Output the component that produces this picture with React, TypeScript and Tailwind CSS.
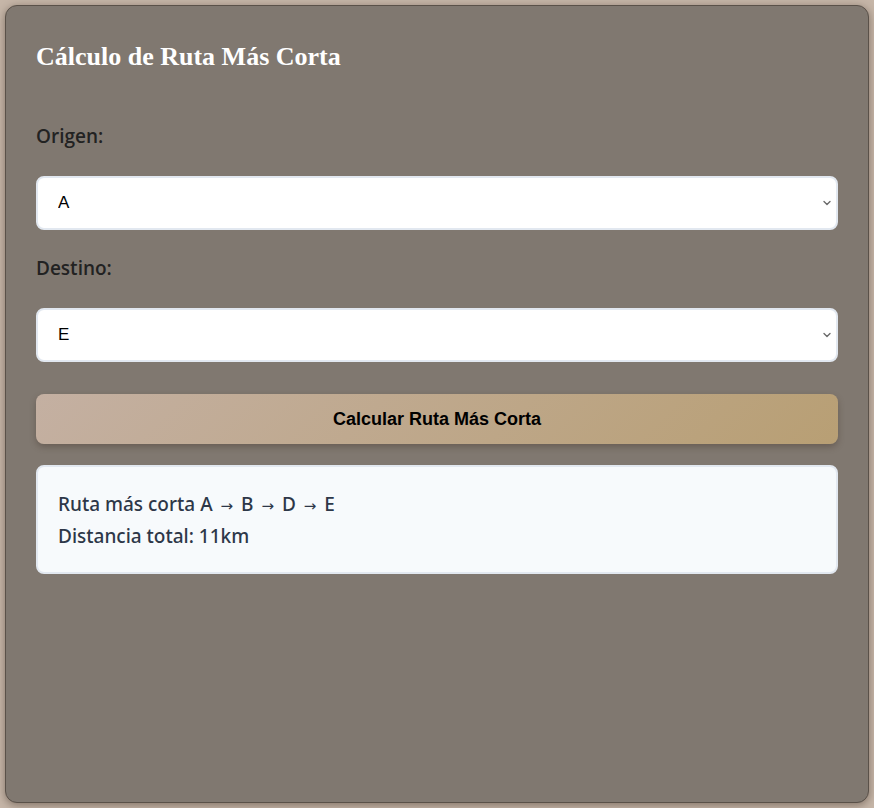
import { useState } from "react";

const NODES = ["A", "B", "C", "D", "E"];
const RUTA = ["A", "B", "D", "E"];

function Chevron() {
  return (
    <svg
      className="pointer-events-none absolute right-[6px] top-1/2 -translate-y-1/2"
      width="10"
      height="10"
      viewBox="0 0 10 10"
      fill="none"
    >
      <path d="M2 3.5L5 6.5L8 3.5" stroke="#6b6b6b" strokeWidth="1.4" strokeLinecap="round" strokeLinejoin="round" />
    </svg>
  );
}

export default function App() {
  const [origen, setOrigen] = useState("A");
  const [destino, setDestino] = useState("E");

  return (
    <div className="min-h-screen bg-[#c6b6a8] p-[5px]">
      {/* Card */}
      <div className="min-h-[798px] rounded-xl border border-[#5a5149] bg-[#807870] px-[30px] pt-[30px] shadow-[0_2px_8px_rgba(60,45,35,0.5)]">
        <h2
          className="text-[26px] font-bold leading-[42px] text-white"
          style={{ fontFamily: '"Liberation Serif", "DejaVu Serif", serif' }}
        >
          Cálculo de Ruta Más Corta
        </h2>

        <label className="mt-[44px] block font-['Open_Sans',sans-serif] text-[19px] font-semibold leading-[28px] text-[#222]">
          Origen:
        </label>
        <div className="relative mt-[26px]">
          <select
            value={origen}
            onChange={(e) => setOrigen(e.target.value)}
            className="block h-[54px] w-full appearance-none rounded-lg border-2 border-[#e2e8f0] bg-white pl-5 pr-6 font-['Liberation_Sans',Arial,sans-serif] text-[17px] text-black"
          >
            {NODES.map((n) => (
              <option key={n} value={n}>{n}</option>
            ))}
          </select>
          <Chevron />
        </div>

        <label className="mt-[24px] block font-['Open_Sans',sans-serif] text-[19px] font-semibold leading-[28px] text-[#222]">
          Destino:
        </label>
        <div className="relative mt-[26px]">
          <select
            value={destino}
            onChange={(e) => setDestino(e.target.value)}
            className="block h-[54px] w-full appearance-none rounded-lg border-2 border-[#e2e8f0] bg-white pl-5 pr-6 font-['Liberation_Sans',Arial,sans-serif] text-[17px] text-black"
          >
            {NODES.map((n) => (
              <option key={n} value={n}>{n}</option>
            ))}
          </select>
          <Chevron />
        </div>

        <button className="mt-8 block h-[50px] w-full rounded-lg bg-[linear-gradient(135deg,#c4b0a2,#b89f74)] font-['Liberation_Sans',Arial,sans-serif] text-[18px] font-bold text-black shadow-[0_3px_6px_rgba(60,45,35,0.35)]">
          Calcular Ruta Más Corta
        </button>

        {/* Resultado */}
        <div className="mt-[21px] rounded-lg border-2 border-[#e2e8f0] bg-[#f7fafc] px-5 pb-[20px] pt-[21px] font-['Noto_Sans',sans-serif] text-[19px] font-medium leading-[32px] text-[#2d3748]">
          <p>
            Ruta más corta{" "}
            {RUTA.map((n, i) => (
              <span key={n}>
                {i > 0 && (
                  <>
                    {" "}
                    <span className="mx-[3px] font-['DejaVu_Sans',sans-serif] text-[15px] font-normal leading-none">→</span>{" "}
                  </>
                )}
                {n}
              </span>
            ))}
          </p>
          <p>Distancia total: 11km</p>
        </div>
      </div>
    </div>
  );
}
